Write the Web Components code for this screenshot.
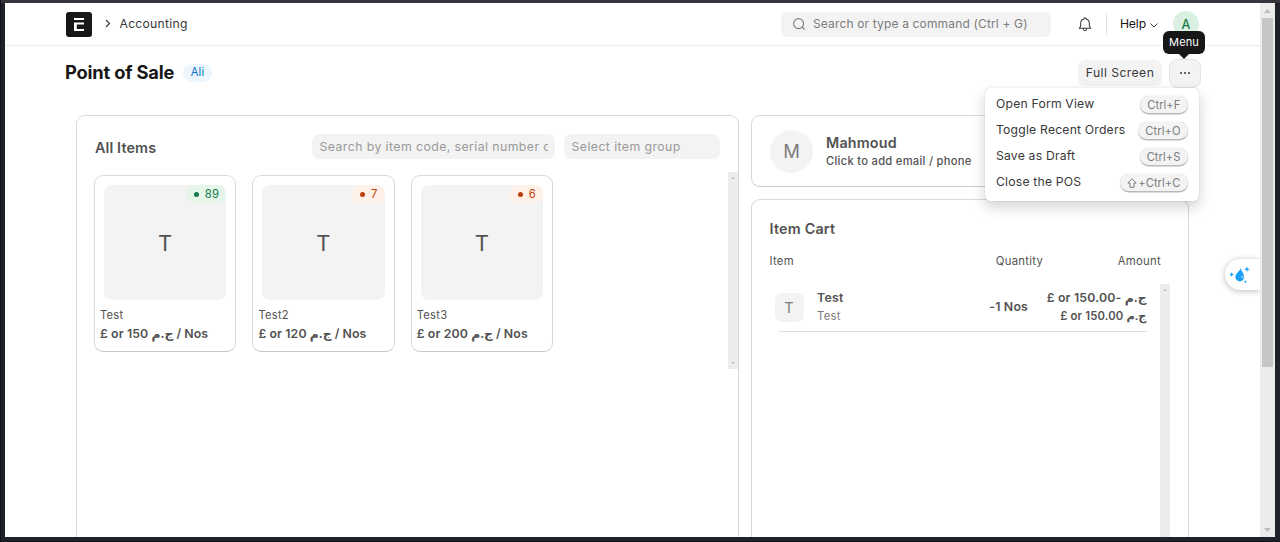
<!DOCTYPE html>
<html lang="en">
<head>
<meta charset="utf-8">
<title>Point of Sale</title>
<style>
html,body{margin:0;height:100%;overflow:hidden}
body{font-family:Inter,"DejaVu Sans",sans-serif;font-size:12.2px;letter-spacing:.02em;color:#383838;background:#20222b}
</style>
</head>
<body>
<pos-window></pos-window>
<script>
function define(name, html, setup) {
  const t = document.createElement('template');
  t.innerHTML = '<style>*{box-sizing:border-box}:host{display:block;box-sizing:border-box}</style>' + html;
  customElements.define(name, class extends HTMLElement {
    connectedCallback() {
      if (this.shadowRoot) return;
      const root = this.attachShadow({ mode: 'open' });
      root.append(t.content.cloneNode(true));
      if (setup) setup(this, root);
    }
  });
}

define('scroll-track', `<style>
:host{background:#ececec;display:flex;flex-direction:column;align-items:center;width:10px;padding:5px 0;flex:none}
:host([main]){width:15px;padding:6px 0 5px}
.fill{flex:1;width:100%;min-height:0}
:host([main]) .fill{padding:5px 2px 0}
.thumb{display:none;height:349px;background:#c6c6c6;width:11px}
:host([main]) .thumb{display:block}
svg{display:block;width:4px;height:2px;flex:none}
:host([main]) svg{width:7px;height:4px}
</style><svg viewBox="0 0 8 4" preserveAspectRatio="none"><path d="M0 4L4 0L8 4Z" fill="#bcbcbc"/></svg><div class="fill"><div class="thumb"></div></div><svg viewBox="0 0 8 4" preserveAspectRatio="none"><path d="M0 0L4 4L8 0Z" fill="#bcbcbc"/></svg>`);

define('soft-field', `<style>
:host{height:25px;background:#f3f3f3;border-radius:7px;padding:0 7px 0 7.500px;color:#999;display:flex;align-items:center;font-size:12.300px;letter-spacing:.034em}
span{overflow:hidden;white-space:nowrap;width:100%;line-height:25px}
</style><span><slot></slot></span>`);

define('app-navbar', `<style>
:host{display:flex;align-items:center;height:43px;border-bottom:1px solid #ededed;padding:0 61px;white-space:nowrap;flex:none}
.logo{width:26px;height:25px;display:block}
.chev{width:6px;height:9px;margin:0 8.500px 1px 13px}
.t{padding-bottom:2px}
.search{margin-left:auto;width:270px;height:25px;border-radius:7px;background:#f3f3f3;display:flex;align-items:center;color:#7c7c7c;padding-left:11px;font-size:12px;letter-spacing:.013em}
.search svg{width:14px;height:14px;margin-right:7px}
.bell{width:14px;height:15px;margin:0 14px 0 27px}
.sep{width:1px;height:21px;background:#e2e2e2;margin-right:13px}
.help{color:#171717;font-weight:420;letter-spacing:-.01em}
.down{width:8px;height:5px;margin:2px 15px 0 4px}
.av{width:26px;height:26px;border-radius:50%;background:#daf0e1;color:#16794c;display:grid;place-items:center;font-weight:500;font-size:12.500px;letter-spacing:0}
</style>
<svg class="logo" viewBox="0 0 26 25"><rect width="26" height="25" rx="3" fill="#171717"/><path d="M8 6h10v2H8zM8 10.400h10v2h-7.200v4.600H18v2H8z" fill="#fff"/></svg>
<svg class="chev" viewBox="0 0 6 9" fill="none" stroke="#383838" stroke-width="1.100"><path d="M1 1l3.600 3.500L1 8"/></svg>
<span class="t">Accounting</span>
<div class="search"><svg viewBox="0 0 14 14" fill="none" stroke="#7c7c7c" stroke-width="1.100"><circle cx="6.600" cy="6.600" r="5"/><path d="M10.200 10.200l2.300 2.300"/></svg><span class="t">Search or type a command (Ctrl + G)</span></div>
<svg class="bell" viewBox="0 0 14 15" fill="none" stroke="#383838" stroke-width="1.050" stroke-linejoin="round"><path d="M1.200 11.300h11.600c-.9-.8-1.500-1.700-1.500-3V6.100A4.300 4.300 0 0 0 8 2V1H6v1a4.300 4.300 0 0 0-3.300 4.100v2.200c0 1.300-.6 2.200-1.500 3zM5.200 11.500c.2 1.500.8 2.200 1.800 2.200s1.600-.7 1.800-2.200"/></svg>
<i class="sep"></i><span class="help t">Help</span>
<svg class="down" viewBox="0 0 8 5" fill="none" stroke="#383838"><path d="M.5.5L4 4L7.500.5"/></svg>
<span class="av">A</span>`);

define('page-head', `<style>
:host{display:flex;align-items:center;height:54px;padding:0 59px 0 60px;flex:none;position:relative}
h1{font-size:18.300px;font-weight:650;letter-spacing:-.01em;margin:0 9px 2px 0;color:#171717}
.pill{height:18px;padding:0 7.500px;border-radius:9px;background:#edf6fd;color:#0070cc;font-size:11.200px;line-height:17px}
.fs{margin-left:auto;height:26px;width:84px;border-radius:7px;background:#f3f3f3;display:grid;place-items:center;margin-right:7px;font-weight:420;white-space:nowrap;letter-spacing:.035em;padding-bottom:1px}
.more{width:32px;height:29px;border-radius:8px;background:#f3f3f3;border:1.500px solid #e4e4e4;display:grid;place-items:center}
.more svg{width:10px;height:2px}
.tip{position:absolute;left:1158px;top:-15px;width:42px;height:23px;border-radius:6px;background:#171717;color:#fff;font-size:11px;letter-spacing:.01em;line-height:22px;text-align:center}
.tip:after{content:"";position:absolute;left:15.500px;top:23px;border:5px solid transparent;border-top-color:#171717;border-bottom:0}
</style><h1>Point of Sale</h1><span class="pill">Ali</span><span class="fs">Full Screen</span>
<span class="more"><svg viewBox="0 0 10 2" fill="#383838"><circle cx="1" cy="1" r="1"/><circle cx="5" cy="1" r="1"/><circle cx="9" cy="1" r="1"/></svg></span>
<span class="tip">Menu</span>`);

define('menu-row', `<style>
:host{display:flex;height:26px;align-items:center;justify-content:space-between;white-space:nowrap}
span{margin-bottom:2px;letter-spacing:.016em}
kbd{font:inherit;font-size:11.200px;letter-spacing:.005em;color:#7c7c7c;background:#f3f3f3;border-radius:9px;height:17px;padding:0 7px 0 7px;line-height:18px;box-shadow:0 1.500px 0 #b9b9b9,0 0 1px #bbb;display:flex;align-items:center;margin-top:1px}
svg{width:10px;height:10px;margin-right:1px}
</style><span><slot></slot></span><kbd></kbd>`, (el, root) => {
  const k = root.querySelector('kbd');
  if (el.hasAttribute('shift')) k.innerHTML = '<svg viewBox="0 0 10 10" fill="none" stroke="#7c7c7c"><path d="M5 .8L9.200 5H7v4.300H3V5H.8z"/></svg>';
  k.append(el.getAttribute('keys'));
});

define('action-menu', `<style>
:host{position:absolute;left:980px;top:85px;width:214px;height:113px;background:#fff;border-radius:5px;padding:3px 11.500px 0 11px;box-shadow:0 0 1px rgba(0,0,0,.3),0 6px 14px rgba(0,0,0,.18)}
</style><menu-row keys="Ctrl+F">Open Form View</menu-row><menu-row keys="Ctrl+O">Toggle Recent Orders</menu-row><menu-row keys="Ctrl+S">Save as Draft</menu-row><menu-row shift keys="+Ctrl+C">Close the POS</menu-row>`);

define('item-card', `<style>
:host{height:177px;border:1px solid #d9d9d9;border-bottom-color:#c8c8c8;border-radius:9px;padding:9px 5px 0;color:#525252;white-space:nowrap}
.pic{height:115px;margin:0 4px;border-radius:8px;background:#f3f3f3;display:grid;place-items:center;font-size:22px;position:relative;letter-spacing:0}
.qty{position:absolute;right:0;top:0;height:18px;border-radius:9px;padding:0 7px 0 8px;background:#e4f5e9;color:#16794c;font-size:11.300px;display:flex;align-items:center;gap:5.500px;letter-spacing:.02em}
.qty:before{content:"";width:5px;height:5px;border-radius:50%;background:currentColor}
:host([low]) .qty{background:#fff1e7;color:#bd3e0c}
.name{font-size:11.200px;line-height:16px;margin-top:7px}
.price{font-weight:600;font-size:12.300px;line-height:18px;margin-top:2px;letter-spacing:.01em;height:18px}
</style><div class="pic">T<span class="qty"></span></div><div class="name"></div><div class="price"><slot></slot></div>`, (el, root) => {
  root.querySelector('.qty').textContent = el.getAttribute('qty');
  root.querySelector('.name').textContent = el.getAttribute('name');
});

define('item-selector', `<style>
:host{border:1px solid #d9d9d9;border-radius:9px 9px 0 0;border-bottom:0;width:663px;flex:none}
header{display:flex;padding:18px 18px 0 18px;height:56px;align-items:flex-start}
h2{margin:0 auto 0 0;font-size:14.400px;line-height:28px;font-weight:600;color:#525252;letter-spacing:.008em}
.a{width:243px;margin-right:9px}.b{width:156px}
.list{display:flex;height:197px}
.grid{flex:1;display:grid;grid-template-columns:repeat(3,142.200px);column-gap:16.200px;padding:3px 0 0 17px;align-items:start}
</style><header><h2>All Items</h2><soft-field class="a">Search by item code, serial number o</soft-field><soft-field class="b">Select item group</soft-field></header>
<div class="list"><div class="grid"><item-card qty="89" name="Test">£ or 150 ج.م / Nos</item-card><item-card low qty="7" name="Test2">£ or 120 ج.م / Nos</item-card><item-card low qty="6" name="Test3">£ or 200 ج.م / Nos</item-card></div><scroll-track></scroll-track></div>`);

define('customer-card', `<style>
:host{height:72px;border:1px solid #d9d9d9;border-bottom-color:#c8c8c8;border-radius:9px;display:flex;align-items:center;padding-left:18px;color:#525252;flex:none}
.av{width:43px;height:43px;border-radius:50%;background:#f3f3f3;color:#7c7c7c;font-size:18.500px;display:grid;place-items:center;margin-right:13px;letter-spacing:0}
b{display:block;font-size:14.300px;font-weight:600;line-height:19px;letter-spacing:.014em}
small{display:block;font-size:11.200px;line-height:18px;font-weight:500;letter-spacing:.025em}
</style><span class="av">M</span><div><b>Mahmoud</b><small>Click to add email / phone</small></div>`);

define('cart-line', `<style>
:host{display:flex;align-items:center;height:48px;margin:0 13.500px 0 9px;border-bottom:1px solid #dedede;color:#525252;white-space:nowrap}
.th{width:29px;height:29px;border-radius:7px;background:#f3f3f3;color:#7c7c7c;display:grid;place-items:center;font-size:14.500px;margin:0 13.500px 0 -4px}
div{padding-bottom:2px}
b{display:block;font-weight:600;font-size:12.300px;line-height:19px}
small{display:block;font-size:11.300px;line-height:18px;color:#7c7c7c}
.q{margin-left:auto;margin-right:17.500px;letter-spacing:.015em;padding-bottom:2px}
.m{text-align:right;width:101px;display:flex;flex-direction:column;align-items:flex-end}
.m b,.m small{height:18.500px;letter-spacing:.015em}.m small{font-weight:600;color:#525252;font-size:11.300px}
</style><span class="th">T</span><div><b>Test</b><small>Test</small></div><b class="q">-1 Nos</b><div class="m"><b>£ or 150.00- ج.م</b><small>£ or 150.00 ج.م</small></div>`);

define('item-cart', `<style>
:host{flex:1;margin-top:12px;border:1px solid #d9d9d9;border-bottom:0;border-radius:9px 9px 0 0;padding:18px 18px 0 17.500px;color:#525252;display:flex;flex-direction:column;min-height:0}
h2{margin:0;font-size:14.300px;line-height:22px;font-weight:600;letter-spacing:.016em}
.cols{display:flex;font-size:11.300px;line-height:16px;padding:13px 9px 0 0;height:44px;letter-spacing:.025em;flex:none}
.cols span:nth-child(2){margin-left:auto;width:122px}
.body{flex:1;display:flex;min-height:0}.lines{flex:1}
scroll-track{height:400px}
</style><h2>Item Cart</h2><div class="cols"><span>Item</span><span>Quantity</span><span>Amount</span></div><div class="body"><div class="lines"><cart-line></cart-line></div><scroll-track></scroll-track></div>`);

define('assist-tab', `<style>
:host{position:absolute;right:0;top:256px;width:35px;height:31px;border-radius:16px 0 0 16px;background:#fff;box-shadow:0 1px 6px rgba(0,0,0,.28)}
svg{width:22px;height:20px;display:block;margin:7px 0 0 4px}
</style><svg viewBox="0 0 22 20" fill="#1ba1f3"><path d="M11.700 2c.4 3 3.500 5.400 3.500 9a4.400 4.400 0 0 1-8.800 0c0-3.600 4.300-5.500 5.300-9z"/><path d="M18 .5l.8 2 2.200.8-2.200.8-.8 2-.8-2-2.200-.8 2.200-.8zM2.600 6l.7 1.800 1.800.7-1.800.7-.7 1.800-.7-1.800L.1 8.500l1.800-.7zM16.300 14l.5 1.200 1.200.5-1.200.5-.5 1.200-.5-1.200-1.200-.5 1.200-.5z"/><circle cx="13.500" cy="11" r="1.200" fill="#8fd2fb"/></svg>`);

define('pos-window', `<style>
:host{height:542px;padding:3px 5px 5px;background:linear-gradient(#38343c 0 3px,#20222b 3px);display:flex;box-shadow:inset 1px 0 #11131b,inset 0 -1px #11131b}
.page{width:1255px;height:534px;background:#fff;position:relative;overflow:hidden;display:flex;flex-direction:column}
.cols{display:flex;gap:12px;flex:1;padding:15px 0 0 71px;min-height:0}
.right{width:438px;display:flex;flex-direction:column}
</style><div class="page"><app-navbar></app-navbar><page-head></page-head><div class="cols"><item-selector></item-selector><div class="right"><customer-card></customer-card><item-cart></item-cart></div></div><action-menu></action-menu><assist-tab></assist-tab></div><scroll-track main></scroll-track>`);
</script>
</body>
</html>
